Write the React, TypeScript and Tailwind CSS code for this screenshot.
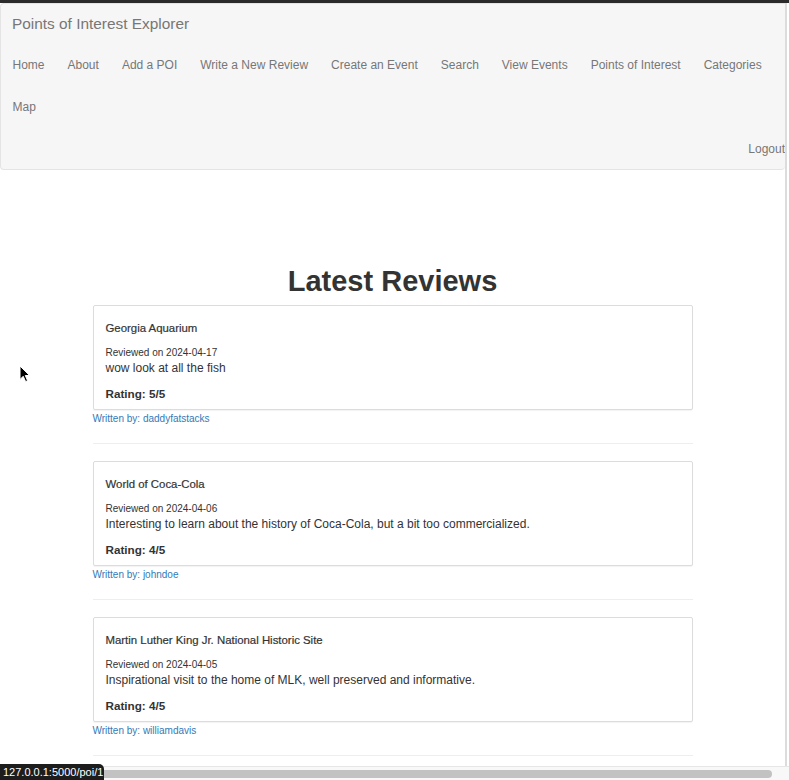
const navLinks = [
  "Home",
  "About",
  "Add a POI",
  "Write a New Review",
  "Create an Event",
  "Search",
  "View Events",
  "Points of Interest",
  "Categories",
  "Map",
];

const reviews = [
  {
    poi: "Georgia Aquarium",
    date: "2024-04-17",
    text: "wow look at all the fish",
    rating: 5,
    author: "daddyfatstacks",
  },
  {
    poi: "World of Coca-Cola",
    date: "2024-04-06",
    text: "Interesting to learn about the history of Coca-Cola, but a bit too commercialized.",
    rating: 4,
    author: "johndoe",
  },
  {
    poi: "Martin Luther King Jr. National Historic Site",
    date: "2024-04-05",
    text: "Inspirational visit to the home of MLK, well preserved and informative.",
    rating: 4,
    author: "williamdavis",
  },
];

function ReviewBlock({ review }: { review: (typeof reviews)[number] }) {
  return (
    <div>
      <div className="rounded-[2px] border border-[#dcdcdc] bg-white px-[12px] pt-[14px] pb-[7px] shadow-[0_1px_1px_rgba(0,0,0,0.05)]">
        <h4 className="text-[11.4px] leading-[17px] text-[#333] [-webkit-text-stroke:0.2px_#333]">
          {review.poi}
        </h4>
        <p className="mt-[9px] text-[10px] leading-[14px] text-[#333]">Reviewed on {review.date}</p>
        <p className="text-[12px] leading-[17px] text-[#333]">{review.text}</p>
        <p className="mt-[8px] text-[11.7px] font-bold leading-[17px] text-[#333]">
          Rating: {review.rating}/5
        </p>
      </div>
      <a href="#" className="block text-[10px] leading-[17px] text-[#337ab7]">
        Written by: {review.author}
      </a>
      <hr className="mt-[16px] mb-[17px] border-0 border-t border-[#eeeeee]" />
    </div>
  );
}

export default function App() {
  return (
    <div className="relative h-[780px] w-[789px] overflow-hidden bg-white [font-family:'Liberation_Sans',Arial,sans-serif]">
      <div className="h-[3px] bg-[#2b2b2b]" />
      <div className="flex h-[763px]">
        <div className="w-[785px] overflow-hidden">
          <nav className="rounded-[4px] rounded-tr-none border border-r-0 border-[#e4e4e4] bg-[#f6f6f6]">
            <div className="flex h-[40px] items-center px-[11px]">
              <a href="#" className="text-[15.4px] text-[#777]">
                Points of Interest Explorer
              </a>
            </div>
            <ul className="flex flex-wrap">
              {navLinks.map((link) => (
                <li key={link} className="flex h-[42px] items-center px-[11.5px]">
                  <a href="#" className="text-[12px] text-[#777]">
                    {link}
                  </a>
                </li>
              ))}
            </ul>
            <div className="flex h-[41px] items-center justify-end">
              <a href="#" className="text-[12px] text-[#777]">
                Logout
              </a>
            </div>
          </nav>

          <main className="pt-[95px]">
            <h1 className="mb-[8px] text-center text-[29px] font-bold leading-[32px] text-[#333]">
              Latest Reviews
            </h1>
            <div className="mx-auto w-[600px]">
              {reviews.map((review) => (
                <ReviewBlock key={review.poi} review={review} />
              ))}
            </div>
          </main>
        </div>
        <div className="w-[2px] bg-[#dcdcdc]" />
        <div className="flex-1 bg-white" />
      </div>

      <div className="flex h-[14px] items-center border-t border-[#e6e6e6] bg-[#f8f8f8] pl-[2px] pr-[17px]">
        <div className="h-[8px] flex-1 rounded-full bg-[#c2c2c2]" />
      </div>

      <div className="absolute bottom-0 left-0 h-[16px] w-[104px] rounded-tr-[5px] bg-[#1d1d1d] px-[3px] text-[11px] leading-[16px] text-white">
        127.0.0.1:5000/poi/1
      </div>

      <svg
        className="absolute left-[19px] top-[365px]"
        width="12"
        height="18"
        viewBox="0 0 12 18"
      >
        <path
          d="M1 1 L1 14.5 L4.2 11.3 L6.6 16.6 L8.6 15.7 L6.3 10.5 L10.6 10.5 Z"
          fill="#000"
          stroke="#fff"
          strokeWidth="1"
          strokeLinejoin="round"
        />
      </svg>
    </div>
  );
}
